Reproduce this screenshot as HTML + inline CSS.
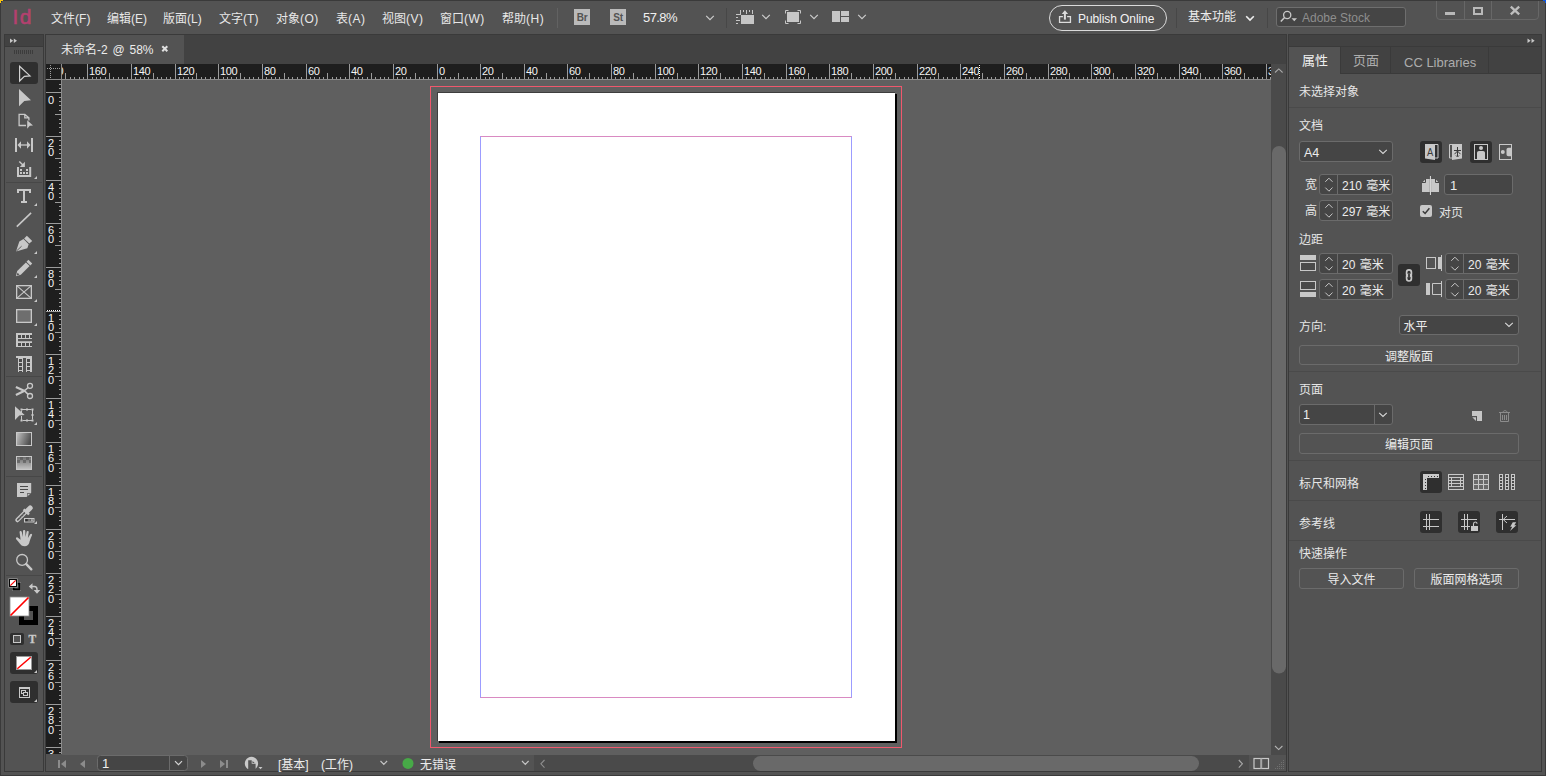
<!DOCTYPE html>
<html lang="zh-CN">
<head>
<meta charset="utf-8">
<title>未命名-2 @ 58% - Adobe InDesign</title>
<style>
*{box-sizing:border-box;margin:0;padding:0}
html,body{width:1546px;height:776px;overflow:hidden}
body{background:#535353;position:relative;font:12px/14px "Liberation Sans","Noto Sans CJK SC",sans-serif;color:#e4e4e4;-webkit-font-smoothing:antialiased}
.abs,.abs>*{position:absolute}
div,span,svg{position:absolute}
.t{white-space:nowrap;line-height:14px;height:14px}
/* window frame */
#frame{left:0;top:0;width:1546px;height:776px;border:1px solid #3a3a3a;pointer-events:none}
/* menu */
#menubar{left:1px;top:1px;width:1544px;height:33px;background:#535353}
.mi{top:11px;font-size:12px;color:#e8e8e8}
.mi i{font-style:normal;letter-spacing:0.5px}
.mi i.n{letter-spacing:0.05px}
.vsep{width:1px;background:#626262}
/* toolbar */
#tools{left:4px;top:34px;width:40px;height:738px;background:#535353;border:1px solid #3a3a3a}
#tools .hd{left:0;top:0;width:38px;height:12px;background:#424242;border-bottom:1px solid #3a3a3a}
.tsep{left:1px;width:36px;height:1px;background:#474747}
/* doc */
#doc{left:45px;top:34px;width:1242px;height:738px;background:#424242;border:1px solid #3a3a3a}
#tab{left:0;top:0;width:138px;height:29px;background:#535353}
#canvas{left:62px;top:80px;width:1209px;height:675px;background:#5f5f5f;overflow:hidden}
#origin{left:46px;top:64px;width:16px;height:16px;background:#1e1e1e}
#vscroll{left:1271px;top:64px;width:15px;height:691px;background:#4a4a4a}
#status{left:46px;top:754px;width:1240px;height:17px;background:#535353}
/* right panel */
#panel{left:1288px;top:34px;width:254px;height:738px;background:#535353;border:1px solid #3a3a3a}
#panel .hd{left:0;top:0;width:252px;height:12px;background:#424242;border-bottom:1px solid #3a3a3a}
#ptabs{left:0;top:12px;width:252px;height:27px;background:#424242;border-bottom:1px solid #3a3a3a}
.ptab{top:0;height:26px;border-right:1px solid #3a3a3a;font-size:13px;color:#adadad}
.ptab.on{background:#535353;height:27px;color:#f0f0f0}
.ptab span{top:6px;line-height:16px;white-space:nowrap}
.hsep{left:0;width:252px;height:1px;background:#4a4a4a}
.lbl{font-size:12px;color:#e6e6e6;white-space:nowrap;line-height:14px}
.fld{background:#454545;border:1px solid #6b6b6b;border-radius:3px}
.fld .v{left:22px;top:3px;font-size:13px;line-height:14px;color:#ececec;white-space:nowrap;word-spacing:1px}
.fld .dv{left:16px;top:0;width:1px;height:100%;background:#6b6b6b}
.btn{border:1px solid #6b6b6b;border-radius:3px;text-align:center;font-size:12px;color:#ececec;line-height:17px;white-space:nowrap}
.ib{width:22px;height:22px;border-radius:3px}
.ib.on{background:#2e2e2e}
</style>
</head>
<body>
<!-- ============ MENU BAR ============ -->
<div id="menubar">
  <span class="t" style="left:11.5px;top:4px;font-size:21px;line-height:24px;height:24px;color:#b3416f;font-family:'Liberation Sans',sans-serif;letter-spacing:1.5px;-webkit-text-stroke:0.6px #b3416f">Id</span>
  <span class="t mi" style="left:50px">文件<i class="n">(F)</i></span>
  <span class="t mi" style="left:106px">编辑<i class="n">(E)</i></span>
  <span class="t mi" style="left:162px">版面<i class="n">(L)</i></span>
  <span class="t mi" style="left:218px">文字<i class="n">(T)</i></span>
  <span class="t mi" style="left:275px">对象<i>(O)</i></span>
  <span class="t mi" style="left:335px">表<i>(A)</i></span>
  <span class="t mi" style="left:381px">视图<i>(V)</i></span>
  <span class="t mi" style="left:439px">窗口<i>(W)</i></span>
  <span class="t mi" style="left:501px">帮助<i>(H)</i></span>
  <div class="vsep" style="left:556px;top:7px;height:20px"></div>
  <!-- Br / St -->
<div style="left:573px;top:8px;width:16px;height:16px;background:#bababa"><span class="t" style="left:0;top:2px;width:16px;text-align:center;font-size:10px;font-weight:bold;color:#535353;letter-spacing:-0.3px">Br</span></div>
<div style="left:609px;top:8px;width:16px;height:16px;background:#bababa"><span class="t" style="left:0;top:2px;width:16px;text-align:center;font-size:10px;font-weight:bold;color:#535353;letter-spacing:-0.3px">St</span></div>
<span class="t" style="left:642px;top:10px;font-size:13px;letter-spacing:-0.6px;color:#f0f0f0">57.8%</span>
<svg style="left:704px;top:13px" width="10" height="8" viewBox="0 0 10 8"><path d="M1.2 1.8 5 5.6 8.8 1.8" fill="none" stroke="#cdcdcd" stroke-width="1.150"/></svg>
<div class="vsep" style="left:725px;top:7px;height:20px;background:#474747"></div>
<!-- view options -->
<svg style="left:734px;top:8px" width="20" height="16" viewBox="735 9 20 16" shape-rendering="crispEdges">
  <rect x="741" y="15" width="13" height="9" fill="#c6c6c6"/>
  <path d="M740.5 10v4.5M736 14.5h5M743.5 10v2M746.5 10v4M749.5 10v2M752.5 10v4M736 17.5h2M736 20.500h4M736 23.5h2" stroke="#c6c6c6" stroke-width="1" fill="none"/>
</svg>
<svg style="left:760px;top:12px" width="10" height="8" viewBox="0 0 10 8"><path d="M1.2 1.8 5 5.6 8.8 1.8" fill="none" stroke="#cdcdcd" stroke-width="1.150"/></svg>
<!-- screen mode -->
<svg style="left:783px;top:8px" width="18" height="16" viewBox="784 9 18 16">
  <rect x="787" y="12" width="12" height="10" fill="#c6c6c6"/>
  <path d="M785.500 13.500v-3h3M797.500 10.500h3v3M800.500 20.500v3h-3M788.500 23.500h-3v-3" stroke="#c6c6c6" stroke-width="1" fill="none"/>
</svg>
<svg style="left:808px;top:12px" width="10" height="8" viewBox="0 0 10 8"><path d="M1.2 1.8 5 5.6 8.8 1.8" fill="none" stroke="#cdcdcd" stroke-width="1.150"/></svg>
<!-- arrange -->
<svg style="left:831px;top:10px" width="18" height="12" viewBox="832 11 18 12" shape-rendering="crispEdges">
  <rect x="832" y="11" width="8" height="11" fill="#c6c6c6"/><rect x="841" y="11" width="8" height="5" fill="#c6c6c6"/><rect x="841" y="17" width="8" height="5" fill="#c6c6c6"/>
</svg>
<svg style="left:856px;top:12px" width="10" height="8" viewBox="0 0 10 8"><path d="M1.2 1.8 5 5.6 8.8 1.8" fill="none" stroke="#cdcdcd" stroke-width="1.150"/></svg>
<!-- publish online -->
<div style="left:1048px;top:4px;width:118px;height:26px;border:1.3px solid #dadada;border-radius:13px"></div>
<svg style="left:1057px;top:9px" width="16" height="16" viewBox="1058 10 16 16"><path d="M1062.900 16.550h-3.350v5.900h10.900v-5.900h-3.350" fill="none" stroke="#dcdcdc" stroke-width="1.300"/><path d="M1064.900 19.600v-6.600" stroke="#dcdcdc" stroke-width="2" fill="none"/><path d="M1061.700 13.900 1064.900 10.300 1068.100 13.900z" fill="#dcdcdc"/></svg>
<span class="t" style="left:1077px;top:11px;font-size:12px;color:#f2f2f2;letter-spacing:-0.08px">Publish Online</span>
<div class="vsep" style="left:1175px;top:7px;height:20px;background:#474747"></div>
<span class="t" style="left:1187px;top:9px;font-size:12px;color:#ececec">基本功能</span>
<svg style="left:1244px;top:13px" width="10" height="8" viewBox="0 0 10 8"><path d="M1.200 2.200 5 6 8.800 2.200" fill="none" stroke="#efefef" stroke-width="1.6"/></svg>
<div class="vsep" style="left:1266px;top:7px;height:20px;background:#474747"></div>
<!-- search -->
<div style="left:1275px;top:6px;width:130px;height:20px;background:#454545;border:1px solid #6e6e6e;border-radius:3px"></div>
<svg style="left:1279px;top:9px" width="20" height="14" viewBox="1280 10 20 14"><circle cx="1287.200" cy="15" r="3.600" fill="none" stroke="#c8c8c8" stroke-width="1.3"/><path d="M1284.600 17.600 1280.800 21.600" stroke="#c8c8c8" stroke-width="1.5" fill="none"/><path d="M1291.500 18.300h5.500l-2.750 3z" fill="#c8c8c8"/></svg>
<span class="t" style="left:1301px;top:10px;font-size:12px;color:#8e8e8e">Adobe Stock</span>
<!-- window controls -->
<div style="left:1435px;top:-4px;width:103px;height:23px;border:1px solid #676767;border-radius:4px"></div>
<div style="left:1463px;top:0;width:1px;height:18px;background:#676767"></div>
<div style="left:1490px;top:0;width:1px;height:18px;background:#676767"></div>
<div style="left:1444px;top:11px;width:10px;height:3px;background:#b9b9b9"></div>
<div style="left:1472px;top:6px;width:10px;height:8px;border:2px solid #b9b9b9"></div>
<svg style="left:1508px;top:4px" width="12" height="11" viewBox="0 0 12 11"><path d="M1.800 1.600 10.200 9.400M10.200 1.600 1.800 9.400" stroke="#bdbdbd" stroke-width="2.300" fill="none"/></svg>

</div>

<!-- ============ TOOLBAR ============ -->
<div id="tools">
  <div class="hd"></div>
  <svg style="left:0;top:0" width="38" height="736" viewBox="5 35 38 736">
<g fill="#c8c8c8" stroke="none">
<!-- header chevrons -->
<path d="M10 38.500l3.200 2.200-3.200 2.200zM13.800 38.500l3.200 2.200-3.200 2.200z"/>
</g>
<!-- gripper -->
<path d="M14.500 50v4M16.500 50v4M18.500 50v4M20.500 50v4M22.500 50v4M24.500 50v4M26.500 50v4M28.500 50v4M30.500 50v4M32.500 50v4" stroke="#3c3c3c" stroke-width="1" fill="none"/>
<!-- selection (active) -->
<rect x="10" y="62" width="28" height="22" rx="3" fill="#2f2f2f"/>
<path d="M19.600 66.300 30 75.900 24.400 76.300 19.600 81z" fill="none" stroke="#d2d2d2" stroke-width="1.200" stroke-linejoin="miter"/>
<!-- direct selection -->
<path d="M19 89 31 100.300 24.300 100.900 19 106.300z" fill="#c8c8c8"/>
<!-- page tool -->
<path d="M26 125.500h-6.900v-11.200h5.700l4.100 3.600v2.500M24.800 114.300v3.600h4.100" fill="none" stroke="#c8c8c8" stroke-width="1.300"/>
<path d="M27.200 120.200 33 125.400 29.800 125.700 27.200 128.800z" fill="#c8c8c8"/>
<!-- gap tool -->
<rect x="15" y="138" width="2" height="14" fill="#c8c8c8"/><rect x="31" y="138" width="2" height="14" fill="#c8c8c8"/>
<path d="M19 145h10" stroke="#c8c8c8" stroke-width="1.300"/>
<path d="M17.500 145 21 141.300v7.400zM30.500 145 27 141.300v7.400z" fill="#c8c8c8"/>
<!-- content collector -->
<path d="M18 167v9h12.200v-9" fill="none" stroke="#c8c8c8" stroke-width="2"/>
<path d="M20 169h2v2h-2zM26 169h2v2h-2zM20 172h2v2h-2zM23 172h2v2h-2zM26 172h2v2h-2z" fill="#c8c8c8"/>
<path d="M19.300 161.500 23.200 165.300" stroke="#c8c8c8" stroke-width="1.500"/>
<path d="M24.900 161.800v5.100h-5.100z" fill="#c8c8c8"/>
<path d="M37 176v3h-3z" fill="#c8c8c8"/>
<path d="M6 182.500h36" stroke="#474747" stroke-width="1"/>
<!-- type tool -->
<path d="M17 189h14v4h-2v-2h-4v10h2v2h-6v-2h2v-10h-4v2h-2z" fill="#c8c8c8"/>
<path d="M37 203v3h-3z" fill="#c8c8c8"/>
<!-- line -->
<path d="M16.800 226.600 31.100 212.800" stroke="#c8c8c8" stroke-width="1.600"/>
<!-- pen -->
<path d="M26.900 235.700 32.200 241 29.300 243.600 24.100 238.500z" fill="#c8c8c8"/>
<path d="M23.500 239.100 28.700 244.200 27.300 248.300 16 251.500 19.300 241.600z" fill="#c8c8c8"/>
<path d="M16.300 251.200 21.600 246.200" stroke="#535353" stroke-width="0.900"/>
<path d="M37 251v3h-3z" fill="#c8c8c8"/>
<!-- pencil -->
<path d="M28.400 259.800 32.200 263.500 30.300 265.500 26.500 261.700z" fill="#c8c8c8"/>
<path d="M25.900 262.400 29.600 266.100 20.800 274.700 15.900 276.200 17.200 271z" fill="#c8c8c8"/>
<path d="M16.700 275.400 17.500 272.700 19.500 274.600z" fill="#535353"/>
<path d="M37 275v3h-3z" fill="#c8c8c8"/>
<!-- rect frame -->
<rect x="16.650" y="285.650" width="14.700" height="12.700" fill="none" stroke="#c8c8c8" stroke-width="1.300"/>
<path d="M16.700 285.700 31.300 298.300M31.300 285.700 16.700 298.300" stroke="#c8c8c8" stroke-width="1.100"/>
<path d="M37 299v3h-3z" fill="#c8c8c8"/>
<!-- rect -->
<rect x="16.650" y="309.650" width="14.700" height="12.700" fill="#6e6e6e" stroke="#c8c8c8" stroke-width="1.300"/>
<path d="M37 323v3h-3z" fill="#c8c8c8"/>
<!-- h grid -->
<path d="M16 333h16v6h-14v2.300h14v5.700h-16z" fill="#c8c8c8"/>
<path d="M18 335h3v3h-3zM22 335h3v3h-3zM26 335h3v3h-3zM30 335h2v3h-2zM18 343h3v3h-3zM22 343h3v3h-3zM26 343h3v3h-3zM30 343h2v3h-2z" fill="#4a4a4a"/>
<!-- v grid -->
<path d="M16 356h16v16h-6v-14h-3v14h-5v-14h-2z" fill="#c8c8c8"/>
<path d="M19 359h3v3h-3zM19 363h3v3h-3zM19 367h3v3h-3zM19 371h3v1h-3zM27 359h3v3h-3zM27 363h3v3h-3zM27 367h3v3h-3zM27 371h3v1h-3z" fill="#4a4a4a"/>
<path d="M6 376.500h36" stroke="#474747" stroke-width="1"/>
<!-- scissors -->
<circle cx="30" cy="385.800" r="2.500" fill="none" stroke="#c8c8c8" stroke-width="1.300"/>
<circle cx="30" cy="396" r="2.500" fill="none" stroke="#c8c8c8" stroke-width="1.300"/>
<path d="M15.900 387.100 24.600 391" stroke="#c8c8c8" stroke-width="2.200" fill="none"/><path d="M15.900 394.900 24.600 390.700" stroke="#c8c8c8" stroke-width="2.200" fill="none"/>
<path d="M23.800 390.200 28.100 394.300M23.800 391.500 28.100 387.500" stroke="#c8c8c8" stroke-width="1.600" fill="none"/>
<!-- free transform -->
<path d="M15 406.200 24.700 415 19.300 415.400 15 420.100z" fill="#c8c8c8"/>
<path d="M21.500 409.500h11v11h-11z" fill="none" stroke="#c8c8c8" stroke-width="1" stroke-dasharray="4.500 1"/>
<path d="M20.500 408.500h2v2h-2zM26 408.500h2v2h-2zM31.500 408.500h2v2h-2zM31.500 414h2v2h-2zM31.500 419.500h2v2h-2zM26 419.500h2v2h-2zM20.500 419.500h2v2h-2z" fill="#c8c8c8"/>
<path d="M37 422v3h-3z" fill="#c8c8c8"/>
<!-- gradient swatch -->
<defs><linearGradient id="gsw" x1="0" x2="1" y1="0" y2="0.300"><stop offset="0" stop-color="#c4c4c4"/><stop offset="1" stop-color="#505050"/></linearGradient>
<linearGradient id="gfe" x1="0" x2="0" y1="0" y2="1"><stop offset="0" stop-color="#6a6a6a"/><stop offset="1" stop-color="#c4c4c4"/></linearGradient></defs>
<rect x="16.500" y="432.500" width="15" height="13" fill="url(#gsw)" stroke="#c8c8c8" stroke-width="1"/>
<!-- gradient feather -->
<rect x="16.500" y="456.500" width="15" height="13" fill="url(#gfe)" stroke="#c8c8c8" stroke-width="1"/>
<path d="M20 457h3v3h-3zM26 457h3v3h-3zM17 460h3v3h-3zM23 460h3v3h-3zM29 460h2v3h-2z" fill="#4e4e4e" opacity="0.550"/>
<path d="M6 476.500h36" stroke="#474747" stroke-width="1"/>
<!-- note -->
<path d="M17 483h14.200v9.800l-4.700 4.200h-9.500z" fill="#c8c8c8"/>
<path d="M20 486.500h8M20 489.500h8M20 492.500h4" stroke="#4a4a4a" stroke-width="1"/>
<path d="M27 493.300h3.700l-3.700 3.300z" fill="#535353"/><path d="M27.600 493.900h2.400l-2.400 2.200z" fill="#c8c8c8"/>
<!-- eyedropper -->
<path d="M25.500 512 17.400 520.100" stroke="#c8c8c8" stroke-width="4.300" stroke-linecap="round" fill="none"/>
<path d="M24.600 512.900 17.700 519.800" stroke="#535353" stroke-width="1.700" stroke-linecap="round" fill="none"/>
<path d="M22.800 514.200l1 1M21.200 515.800l1 1M19.600 517.400l1 1" stroke="#9a9a9a" stroke-width="0.800" fill="none"/>
<path d="M23.600 509.300 29 514.500" stroke="#c8c8c8" stroke-width="2.400" fill="none"/>
<path d="M27.400 510.700 30.200 507.900" stroke="#c8c8c8" stroke-width="5" stroke-linecap="round" fill="none"/>
<rect x="24.500" y="518.500" width="9.500" height="3.500" fill="#535353" stroke="#c8c8c8" stroke-width="1"/>
<rect x="25.500" y="519.200" width="2" height="2" fill="#2e2e2e"/><rect x="28.200" y="519.200" width="2" height="2" fill="#7a7a7a"/><rect x="30.900" y="519.200" width="2" height="2" fill="#a8a8a8"/>
<path d="M37 521v3h-3z" fill="#c8c8c8"/>
<!-- hand -->
<path d="M21.600 545.600C20 544 18.500 541.500 16.200 539.200C15.400 538.200 16.400 536.800 17.600 537.500L20.600 539.800L19.600 532.400C19.400 530.900 21.500 530.600 21.800 532L22.800 537L23 531C23 529.500 25.300 529.500 25.300 531L25.500 537L26.600 531.800C26.900 530.400 29 530.800 28.700 532.300L27.900 538L30.200 534.200C31 533 32.700 534 32 535.300C30.500 538.500 29.800 541 29.200 543C28.600 545 27 546.200 24.800 546.200C23.400 546.200 22.400 546 21.600 545.600Z" fill="#c8c8c8"/>
<!-- zoom -->
<circle cx="22.100" cy="559.900" r="5.400" fill="none" stroke="#c8c8c8" stroke-width="1.300"/>
<path d="M26.300 564.100 31.300 569.300" stroke="#c8c8c8" stroke-width="2.400" stroke-linecap="round"/>
<path d="M6 575.500h36" stroke="#474747" stroke-width="1"/>
<!-- default fill/stroke -->
<rect x="12.500" y="582.500" width="8" height="8" fill="none" stroke="#9a9a9a" stroke-width="1"/>
<rect x="13.500" y="583.500" width="6" height="6" fill="none" stroke="#000" stroke-width="2"/>
<rect x="9.500" y="579.500" width="7" height="7" fill="#fff" stroke="#000" stroke-width="1"/>
<rect x="8.700" y="578.700" width="8.600" height="8.600" fill="none" stroke="#9a9a9a" stroke-width="0.700"/>
<path d="M10.300 585.700 15.700 580.300" stroke="#f00" stroke-width="1.200"/>
<!-- swap -->
<path d="M32 586.500h2.500c2 0 2.500 1 2.500 3v1.500" fill="none" stroke="#c8c8c8" stroke-width="1.400"/>
<path d="M28.800 586.500 32.500 583.200v6.600zM37 593.800 33.700 590h6.600z" fill="#c8c8c8"/>
<!-- stroke swatch -->
<path d="M19 606h19v19h-19zM24 611v9h9v-9z" fill="#000" fill-rule="evenodd"/>
<!-- fill swatch -->
<rect x="10" y="597" width="19" height="19" fill="#fff" stroke="#8a8a8a" stroke-width="0.800"/>
<path d="M10.500 615.500 28.500 597.500" stroke="#f00" stroke-width="1.700"/>
<!-- format container / text -->
<rect x="10" y="633" width="14" height="12" rx="2" fill="#2f2f2f"/>
<rect x="13.500" y="635.500" width="7" height="7" fill="#535353" stroke="#c8c8c8" stroke-width="1"/>
<text x="28.600" y="642.800" font-family="Liberation Serif, serif" font-weight="bold" font-size="11.500" fill="#c8c8c8" stroke="#c8c8c8" stroke-width="0.300">T</text>
<!-- apply none -->
<rect x="10" y="652" width="28" height="22" rx="3" fill="#2f2f2f"/>
<rect x="16.500" y="656.500" width="15" height="13" fill="#fff" stroke="#9a9a9a" stroke-width="1"/>
<path d="M17.300 668.800 30.700 657.200" stroke="#f00" stroke-width="1.500"/>
<path d="M37 670v3h-3z" fill="#c8c8c8"/>
<!-- view mode -->
<rect x="10" y="681" width="28" height="22" rx="3" fill="#2f2f2f"/>
<rect x="19.500" y="687.500" width="10" height="10" fill="none" stroke="#c8c8c8" stroke-width="1"/>
<path d="M19.500 688.500h10" stroke="#c8c8c8" stroke-width="1"/>
<rect x="21.500" y="690.500" width="4" height="3" fill="none" stroke="#c8c8c8" stroke-width="1"/>
<rect x="23.500" y="692.500" width="4" height="3" fill="#2f2f2f" stroke="#c8c8c8" stroke-width="1"/>
<path d="M37 699v3h-3z" fill="#c8c8c8"/>
</svg>

</div>

<!-- ============ DOCUMENT WINDOW ============ -->
<div id="doc"></div>
<div id="tab" style="left:46px;top:35px"><span class="t" style="left:15px;top:8px;font-size:12px;color:#ececec;word-spacing:1.5px">未命名-2 @ 58%</span><svg style="left:115px;top:10px" width="8" height="8" viewBox="0 0 8 8"><path d="M1.300 1.300 6.300 6.300M6.300 1.300 1.300 6.300" stroke="#e0e0e0" stroke-width="2" fill="none"/></svg>
</div>
<div id="origin"><svg style="left:0;top:0" width="16" height="16" viewBox="46 64 16 16" shape-rendering="crispEdges"><path d="M47 68h1v1h-1zM49 68h1v1h-1zM51 68h1v1h-1zM53 68h1v1h-1zM55 68h1v1h-1zM57 68h1v1h-1zM59 68h1v1h-1zM50 65h1v1h-1zM50 67h1v1h-1zM50 69h1v1h-1zM50 71h1v1h-1zM50 73h1v1h-1zM50 75h1v1h-1zM50 77h1v1h-1z" fill="#a0a0a0"/><path d="M46 79.500h16M61.500 64v16" stroke="#8c8c8c" stroke-width="1"/></svg></div>
<svg width="1209" height="16" viewBox="62 64 1209 16" style="left:62px;top:64px"><rect x="62" y="64" width="1209" height="15" fill="#1e1e1e"/><rect x="62" y="79" width="1209" height="1" fill="#8c8c8c"/><path d="M65 73v6M70 77v2M74 77v2M79 77v2M83 77v2M87 64v15M92 77v2M96 77v2M100 77v2M105 77v2M109 73v6M113 77v2M118 77v2M122 77v2M127 77v2M131 64v15M135 77v2M140 77v2M144 77v2M148 77v2M153 73v6M157 77v2M161 77v2M166 77v2M170 77v2M175 64v15M179 77v2M183 77v2M188 77v2M192 77v2M196 73v6M201 77v2M205 77v2M210 77v2M214 77v2M218 64v15M223 77v2M227 77v2M231 77v2M236 77v2M240 73v6M244 77v2M249 77v2M253 77v2M258 77v2M262 64v15M266 77v2M271 77v2M275 77v2M279 77v2M284 73v6M288 77v2M292 77v2M297 77v2M301 77v2M306 64v15M310 77v2M314 77v2M319 77v2M323 77v2M327 73v6M332 77v2M336 77v2M340 77v2M345 77v2M349 64v15M354 77v2M358 77v2M362 77v2M367 77v2M371 73v6M375 77v2M380 77v2M384 77v2M388 77v2M393 64v15M397 77v2M402 77v2M406 77v2M410 77v2M415 73v6M419 77v2M423 77v2M428 77v2M432 77v2M437 64v15M441 77v2M445 77v2M450 77v2M454 77v2M458 73v6M463 77v2M467 77v2M471 77v2M476 77v2M480 64v15M485 77v2M489 77v2M493 77v2M498 77v2M502 73v6M506 77v2M511 77v2M515 77v2M519 77v2M524 64v15M528 77v2M533 77v2M537 77v2M541 77v2M546 73v6M550 77v2M554 77v2M559 77v2M563 77v2M567 64v15M572 77v2M576 77v2M581 77v2M585 77v2M589 73v6M594 77v2M598 77v2M602 77v2M607 77v2M611 64v15M615 77v2M620 77v2M624 77v2M629 77v2M633 73v6M637 77v2M642 77v2M646 77v2M650 77v2M655 64v15M659 77v2M663 77v2M668 77v2M672 77v2M677 73v6M681 77v2M685 77v2M690 77v2M694 77v2M698 64v15M703 77v2M707 77v2M712 77v2M716 77v2M720 73v6M725 77v2M729 77v2M733 77v2M738 77v2M742 64v15M746 77v2M751 77v2M755 77v2M760 77v2M764 73v6M768 77v2M773 77v2M777 77v2M781 77v2M786 64v15M790 77v2M794 77v2M799 77v2M803 77v2M808 73v6M812 77v2M816 77v2M821 77v2M825 77v2M829 64v15M834 77v2M838 77v2M842 77v2M847 77v2M851 73v6M856 77v2M860 77v2M864 77v2M869 77v2M873 64v15M877 77v2M882 77v2M886 77v2M890 77v2M895 73v6M899 77v2M904 77v2M908 77v2M912 77v2M917 64v15M921 77v2M925 77v2M930 77v2M934 77v2M938 73v6M943 77v2M947 77v2M952 77v2M956 77v2M960 64v15M965 77v2M969 77v2M973 77v2M978 77v2M982 73v6M987 77v2M991 77v2M995 77v2M1000 77v2M1004 64v15M1008 77v2M1013 77v2M1017 77v2M1021 77v2M1026 73v6M1030 77v2M1035 77v2M1039 77v2M1043 77v2M1048 64v15M1052 77v2M1056 77v2M1061 77v2M1065 77v2M1069 73v6M1074 77v2M1078 77v2M1083 77v2M1087 77v2M1091 64v15M1096 77v2M1100 77v2M1104 77v2M1109 77v2M1113 73v6M1117 77v2M1122 77v2M1126 77v2M1131 77v2M1135 64v15M1139 77v2M1144 77v2M1148 77v2M1152 77v2M1157 73v6M1161 77v2M1165 77v2M1170 77v2M1174 77v2M1179 64v15M1183 77v2M1187 77v2M1192 77v2M1196 77v2M1200 73v6M1205 77v2M1209 77v2M1214 77v2M1218 77v2M1222 64v15M1227 77v2M1231 77v2M1235 77v2M1240 77v2M1244 73v6M1248 77v2M1253 77v2M1257 77v2M1262 77v2M1266 64v15M1270 77v2" stroke="#9c9c9c" stroke-width="1" transform="translate(0.5 0)" fill="none"/><g font-family="Liberation Sans, sans-serif" font-size="11" letter-spacing="-0.35" fill="#f4f4f4"><text x="46" y="75">180</text><text x="89" y="75">160</text><text x="133" y="75">140</text><text x="177" y="75">120</text><text x="220" y="75">100</text><text x="264" y="75">80</text><text x="308" y="75">60</text><text x="351" y="75">40</text><text x="395" y="75">20</text><text x="439" y="75">0</text><text x="482" y="75">20</text><text x="526" y="75">40</text><text x="569" y="75">60</text><text x="613" y="75">80</text><text x="657" y="75">100</text><text x="700" y="75">120</text><text x="744" y="75">140</text><text x="788" y="75">160</text><text x="831" y="75">180</text><text x="875" y="75">200</text><text x="919" y="75">220</text><text x="962" y="75">240</text><text x="1006" y="75">260</text><text x="1050" y="75">280</text><text x="1093" y="75">300</text><text x="1137" y="75">320</text><text x="1181" y="75">340</text><text x="1224" y="75">360</text><text x="1268" y="75">380</text></g><path d="M979.5 64v15" stroke="#000" stroke-width="1"/><path d="M979.5 65v14" stroke="#fff" stroke-width="1" stroke-dasharray="1 1"/></svg>
<svg width="16" height="674" viewBox="46 80 16 674" style="left:46px;top:80px"><rect x="46" y="80" width="15" height="674" fill="#1e1e1e"/><rect x="61" y="80" width="1" height="674" fill="#8c8c8c"/><path d="M59 84h2M59 88h2M46 92h15M59 97h2M59 101h2M59 105h2M59 110h2M55 114h6M59 119h2M59 123h2M59 127h2M59 132h2M46 136h15M59 140h2M59 145h2M59 149h2M59 153h2M55 158h6M59 162h2M59 167h2M59 171h2M59 175h2M46 180h15M59 184h2M59 188h2M59 193h2M59 197h2M55 202h6M59 206h2M59 210h2M59 215h2M59 219h2M46 223h15M59 228h2M59 232h2M59 236h2M59 241h2M55 245h6M59 250h2M59 254h2M59 258h2M59 263h2M46 267h15M59 271h2M59 276h2M59 280h2M59 284h2M55 289h6M59 293h2M59 298h2M59 302h2M59 306h2M46 311h15M59 315h2M59 319h2M59 324h2M59 328h2M55 332h6M59 337h2M59 341h2M59 346h2M59 350h2M46 354h15M59 359h2M59 363h2M59 367h2M59 372h2M55 376h6M59 380h2M59 385h2M59 389h2M59 394h2M46 398h15M59 402h2M59 407h2M59 411h2M59 415h2M55 420h6M59 424h2M59 429h2M59 433h2M59 437h2M46 442h15M59 446h2M59 450h2M59 455h2M59 459h2M55 463h6M59 468h2M59 472h2M59 477h2M59 481h2M46 485h15M59 490h2M59 494h2M59 498h2M59 503h2M55 507h6M59 511h2M59 516h2M59 520h2M59 525h2M46 529h15M59 533h2M59 538h2M59 542h2M59 546h2M55 551h6M59 555h2M59 559h2M59 564h2M59 568h2M46 573h15M59 577h2M59 581h2M59 586h2M59 590h2M55 594h6M59 599h2M59 603h2M59 607h2M59 612h2M46 616h15M59 621h2M59 625h2M59 629h2M59 634h2M55 638h6M59 642h2M59 647h2M59 651h2M59 655h2M46 660h15M59 664h2M59 669h2M59 673h2M59 677h2M55 682h6M59 686h2M59 690h2M59 695h2M59 699h2M46 704h15M59 708h2M59 712h2M59 717h2M59 721h2M55 725h6M59 730h2M59 734h2M59 738h2M59 743h2M46 747h15M59 752h2" stroke="#9c9c9c" stroke-width="1" transform="translate(0 0.5)" fill="none"/><g font-family="Liberation Sans, sans-serif" font-size="11" fill="#f4f4f4"><text x="48" y="104">0</text><text x="48" y="147">2</text><text x="48" y="156.3">0</text><text x="48" y="191">4</text><text x="48" y="200.3">0</text><text x="48" y="234">6</text><text x="48" y="243.3">0</text><text x="48" y="278">8</text><text x="48" y="287.3">0</text><text x="48" y="322">1</text><text x="48" y="331.3">0</text><text x="48" y="340.6">0</text><text x="48" y="365">1</text><text x="48" y="374.3">2</text><text x="48" y="383.6">0</text><text x="48" y="409">1</text><text x="48" y="418.3">4</text><text x="48" y="427.6">0</text><text x="48" y="453">1</text><text x="48" y="462.3">6</text><text x="48" y="471.6">0</text><text x="48" y="496">1</text><text x="48" y="505.3">8</text><text x="48" y="514.6">0</text><text x="48" y="540">2</text><text x="48" y="549.3">0</text><text x="48" y="558.6">0</text><text x="48" y="584">2</text><text x="48" y="593.3">2</text><text x="48" y="602.6">0</text><text x="48" y="627">2</text><text x="48" y="636.3">4</text><text x="48" y="645.6">0</text><text x="48" y="671">2</text><text x="48" y="680.3">6</text><text x="48" y="689.6">0</text><text x="48" y="715">2</text><text x="48" y="724.3">8</text><text x="48" y="733.6">0</text><text x="48" y="758">3</text></g><path d="M46 310.5h15" stroke="#000" stroke-width="1"/><path d="M47 310.5h14" stroke="#fff" stroke-width="1" stroke-dasharray="1 1"/></svg>
<div id="status"><svg style="left:0;top:0" width="1240" height="17" viewBox="46 754 1240 17">
<g fill="#8c8c8c">
<rect x="58" y="760" width="2" height="8"/><path d="M66 760v8l-5-4z"/>
<path d="M85 760v8l-5-4z"/>
<path d="M201 760v8l5-4z"/>
<path d="M220 760v8l5-4z"/><rect x="226" y="760" width="2" height="8"/>
</g>
<rect x="97.500" y="755.500" width="90" height="15" rx="3" fill="#454545" stroke="#6b6b6b"/>
<path d="M169.500 755.500v15" stroke="#6b6b6b"/>
<path d="M175 761.200l3.500 3.500 3.500-3.500" fill="none" stroke="#d2d2d2" stroke-width="1.200"/>
<!-- preflight -->
<clipPath id="pfc"><rect x="244" y="756" width="16" height="13"/></clipPath>
<g clip-path="url(#pfc)"><path d="M251.450 756.800a6.650 6.650 0 1 0 0.010 0zM248.200 760.200h3.500v3.500h3.900v7h-7.400z" fill="#cacaca" fill-rule="evenodd"/>
<path d="M252.500 761l2.200 2.100h-2.200z" fill="#535353"/></g>
<path d="M258.500 767h4l-2 2.200z" fill="#c8c8c8"/>
<path d="M380.500 761l3.300 3.300 3.300-3.300" fill="none" stroke="#c4c4c4" stroke-width="1.200"/>
<circle cx="408" cy="763.400" r="5.500" fill="#47a947"/>
<path d="M522 761l3.300 3.300 3.300-3.300" fill="none" stroke="#c4c4c4" stroke-width="1.200"/>
<!-- hscroll -->
<rect x="534" y="755" width="715" height="16" fill="#4a4a4a"/>
<path d="M544.500 760l-3.600 3.800 3.600 3.800" fill="none" stroke="#8e8e8e" stroke-width="1.100"/>
<rect x="753" y="756" width="446" height="15" rx="7.500" fill="#696969"/>
<path d="M1238.800 760l3.600 3.800-3.600 3.800" fill="none" stroke="#a8a8a8" stroke-width="1.100"/>
<rect x="1254" y="758.500" width="14.500" height="10" fill="none" stroke="#c8c8c8" stroke-width="1.200"/>
<path d="M1261.200 758.500v10" stroke="#a6a6a6" stroke-width="2"/>
<g fill="#707070"><rect x="1283" y="760" width="1" height="1"/><rect x="1281" y="762" width="1" height="1"/><rect x="1283" y="762" width="1" height="1"/><rect x="1279" y="764" width="1" height="1"/><rect x="1281" y="764" width="1" height="1"/><rect x="1283" y="764" width="1" height="1"/><rect x="1277" y="766" width="1" height="1"/><rect x="1279" y="766" width="1" height="1"/><rect x="1281" y="766" width="1" height="1"/><rect x="1283" y="766" width="1" height="1"/><rect x="1275" y="768" width="1" height="1"/><rect x="1277" y="768" width="1" height="1"/><rect x="1279" y="768" width="1" height="1"/><rect x="1281" y="768" width="1" height="1"/><rect x="1283" y="768" width="1" height="1"/></g>
</svg>
<span class="t" style="left:56px;top:3px;font-size:13px;color:#f0f0f0">1</span>
<span class="t" style="left:232px;top:4px;font-size:12px;color:#ececec">[基本]</span>
<span class="t" style="left:275px;top:4px;font-size:12px;color:#ececec">(工作)</span>
<span class="t" style="left:374px;top:4px;font-size:12px;color:#ececec">无错误</span>
</div>
<div id="canvas">
  <!-- coordinates relative to canvas (62,80) -->
  <div style="left:368px;top:6px;width:472px;height:662px;border:1px solid #ef586d"></div>
  <div style="left:377px;top:14px;width:458px;height:649px;background:#000"></div>
  <div style="left:375px;top:12px;width:458px;height:649px;background:#fff;border-left:1px solid #3e3e3e;border-top:1px solid #3e3e3e"></div>
  <div style="left:418px;top:56px;width:372px;height:562px;border-top:1px solid #d98ac2;border-bottom:1px solid #d98ac2;border-left:1px solid #9c9cff;border-right:1px solid #9c9cff"></div>
</div>
<div id="vscroll"><svg style="left:0;top:0" width="15" height="690" viewBox="1271 64 15 690">
<path d="M1275 72.500l3.800-3.600 3.800 3.600" fill="none" stroke="#a8a8a8" stroke-width="1.100"/>
<rect x="1272" y="146" width="14" height="527.500" rx="7" fill="#696969"/>
<path d="M1275 746l3.700 3.600 3.700-3.600" fill="none" stroke="#b4b4b4" stroke-width="1.100"/>
</svg>
</div>

<!-- ============ RIGHT PANEL ============ -->
<div id="panel">
  <div class="hd"></div>
  <div id="ptabs"><div class="ptab on" style="left:0;width:52px"><span style="left:13px">属性</span></div><div class="ptab" style="left:52px;width:50px"><span style="left:12px">页面</span></div><div class="ptab" style="left:102px;width:98px"><span style="left:13px;top:8px">CC Libraries</span></div></div>
<svg style="left:238px;top:3px" width="9" height="6" viewBox="0 0 9 6"><path d="M0.500 0.500l3.200 2.300-3.200 2.300zM4.500 0.500l3.200 2.300-3.200 2.300z" fill="#c8c8c8"/></svg>
<span class="lbl" style="left:10px;top:50px;font-size:12px;color:#e6e6e6;">未选择对象</span>
<div class="hsep" style="top:72px"></div>
<span class="lbl" style="left:10px;top:84px;font-size:12px;color:#e6e6e6;">文档</span>
<div class="fld" style="left:10px;top:106px;width:94px;height:21px"><svg style="left:78px;top:5.5px" width="10" height="8" viewBox="0 0 10 8"><path d="M1.200 1.800 5 5.500 8.800 1.800" fill="none" stroke="#dadada" stroke-width="1.050"/></svg><span class="v" style="left:4px;top:3.5px;font-size:12.5px">A4</span></div>
<span class="lbl" style="left:16px;top:143px;font-size:12px;color:#e6e6e6;">宽</span>
<div class="fld" style="left:30px;top:139px;width:74px;height:21px"><div class="dv" style="left:17px"></div><svg style="left:4px;top:2px" width="10" height="15" viewBox="0 0 10 15"><path d="M1.300 5.500l3.600-3.600 3.600 3.600 M1.300 11.300l3.600 3.600 3.600-3.600" transform="translate(0 -0.700)" fill="none" stroke="#c8c8c8" stroke-width="1"/></svg><span class="v" style="left:22px;top:4px;font-size:12px">210 毫米</span></div>
<span class="lbl" style="left:16px;top:169px;font-size:12px;color:#e6e6e6;">高</span>
<div class="fld" style="left:30px;top:165px;width:74px;height:21px"><div class="dv" style="left:17px"></div><svg style="left:4px;top:2px" width="10" height="15" viewBox="0 0 10 15"><path d="M1.300 5.500l3.600-3.600 3.600 3.600 M1.300 11.300l3.600 3.600 3.600-3.600" transform="translate(0 -0.700)" fill="none" stroke="#c8c8c8" stroke-width="1"/></svg><span class="v" style="left:22px;top:4px;font-size:12px">297 毫米</span></div>
<div class="fld" style="left:155px;top:139px;width:69px;height:21px"><span class="v" style="left:5px;top:4px;font-size:13px">1</span></div>
<svg style="left:131px;top:170px" width="12" height="12" viewBox="0 0 12 12"><rect x="0" y="0" width="12" height="12" rx="2" fill="#c8c8c8"/><path d="M2.800 6.200 5.100 8.500 9.400 3.200" fill="none" stroke="#3a3a3a" stroke-width="1.500"/></svg>
<span class="lbl" style="left:150px;top:171px;font-size:12px;color:#e6e6e6;">对页</span>
<span class="lbl" style="left:10px;top:198px;font-size:12px;color:#e6e6e6;">边距</span>
<div class="fld" style="left:30px;top:218px;width:74px;height:21px"><div class="dv" style="left:17px"></div><svg style="left:4px;top:2px" width="10" height="15" viewBox="0 0 10 15"><path d="M1.300 5.500l3.600-3.600 3.600 3.600 M1.300 11.300l3.600 3.600 3.600-3.600" transform="translate(0 -0.700)" fill="none" stroke="#c8c8c8" stroke-width="1"/></svg><span class="v" style="left:22px;top:4px;font-size:12px">20 毫米</span></div>
<div class="fld" style="left:30px;top:244px;width:74px;height:21px"><div class="dv" style="left:17px"></div><svg style="left:4px;top:2px" width="10" height="15" viewBox="0 0 10 15"><path d="M1.300 5.500l3.600-3.600 3.600 3.600 M1.300 11.300l3.600 3.600 3.600-3.600" transform="translate(0 -0.700)" fill="none" stroke="#c8c8c8" stroke-width="1"/></svg><span class="v" style="left:22px;top:4px;font-size:12px">20 毫米</span></div>
<div class="fld" style="left:156px;top:218px;width:74px;height:21px"><div class="dv" style="left:17px"></div><svg style="left:4px;top:2px" width="10" height="15" viewBox="0 0 10 15"><path d="M1.300 5.500l3.600-3.600 3.600 3.600 M1.300 11.300l3.600 3.600 3.600-3.600" transform="translate(0 -0.700)" fill="none" stroke="#c8c8c8" stroke-width="1"/></svg><span class="v" style="left:22px;top:4px;font-size:12px">20 毫米</span></div>
<div class="fld" style="left:156px;top:244px;width:74px;height:21px"><div class="dv" style="left:17px"></div><svg style="left:4px;top:2px" width="10" height="15" viewBox="0 0 10 15"><path d="M1.300 5.500l3.600-3.600 3.600 3.600 M1.300 11.300l3.600 3.600 3.600-3.600" transform="translate(0 -0.700)" fill="none" stroke="#c8c8c8" stroke-width="1"/></svg><span class="v" style="left:22px;top:4px;font-size:12px">20 毫米</span></div>
<span class="lbl" style="left:10px;top:285px;font-size:12px;color:#e6e6e6;">方向:</span>
<div class="fld" style="left:110px;top:280px;width:120px;height:20px"><svg style="left:104px;top:5px" width="10" height="8" viewBox="0 0 10 8"><path d="M1.200 1.800 5 5.500 8.800 1.800" fill="none" stroke="#dadada" stroke-width="1.050"/></svg><span class="v" style="left:3.5px;top:4px;font-size:12px">水平</span></div>
<div class="btn" style="left:10px;top:310px;width:220px;height:20px;line-height:14px;padding-top:4px">调整版面</div>
<div class="hsep" style="top:336px"></div>
<span class="lbl" style="left:10px;top:348px;font-size:12px;color:#e6e6e6;">页面</span>
<div class="fld" style="left:10px;top:369px;width:94px;height:21px"><div class="dv" style="left:74px"></div><svg style="left:78px;top:5.5px" width="10" height="8" viewBox="0 0 10 8"><path d="M1.200 1.800 5 5.500 8.800 1.800" fill="none" stroke="#dadada" stroke-width="1.050"/></svg><span class="v" style="left:3px;top:2.5px;font-size:12.5px">1</span></div>
<div class="btn" style="left:10px;top:398px;width:220px;height:21px;line-height:15px;padding-top:4px">编辑页面</div>
<div class="hsep" style="top:425px"></div>
<span class="lbl" style="left:10px;top:442px;font-size:12px;color:#e6e6e6;">标尺和网格</span>
<div class="hsep" style="top:465px"></div>
<span class="lbl" style="left:10px;top:482px;font-size:12px;color:#e6e6e6;">参考线</span>
<div class="hsep" style="top:505px"></div>
<span class="lbl" style="left:10px;top:512px;font-size:12px;color:#e6e6e6;">快速操作</span>
<div class="btn" style="left:10px;top:533px;width:105px;height:21px;line-height:15px;padding-top:4px">导入文件</div>
<div class="btn" style="left:125px;top:533px;width:105px;height:21px;line-height:15px;padding-top:4px">版面网格选项</div>
<svg style="left:0;top:0" width="252" height="600" viewBox="1289 35 252 600"><rect x="1420" y="141" width="22" height="22" rx="3" fill="#2f2f2f"/><rect x="1470" y="141" width="22" height="22" rx="3" fill="#2f2f2f"/><path d="M1434.500 144.500h3.500v13.500h-3.500" fill="none" stroke="#c8c8c8" stroke-width="1"/><path d="M1425 144h10v16l-10-1.500z" fill="#c8c8c8"/><text transform="translate(1427 155.700) scale(0.9 1)" font-family="Liberation Sans, sans-serif" font-size="10.500" fill="#3a3a3a">A</text><path d="M1452.500 144.500h-3v13.500h3" fill="none" stroke="#c8c8c8" stroke-width="1"/><path d="M1452 144h10v14.500l-10 1.500z" fill="#c8c8c8"/><path d="M1457.500 147v9M1454 150.500h7M1454.500 154.200 1457.500 151 1460.500 154.200M1456 155.500l1.500 1.500 1.500-1.500" fill="none" stroke="#3a3a3a" stroke-width="1"/><rect x="1474.500" y="144.500" width="13" height="15" fill="none" stroke="#c8c8c8" stroke-width="1"/><circle cx="1481" cy="148" r="2" fill="#c8c8c8"/><path d="M1477 160v-7c0-1.200 0.800-2 2-2h4c1.200 0 2 0.800 2 2v7z" fill="#c8c8c8"/><rect x="1499.500" y="144.500" width="12" height="15" fill="none" stroke="#c8c8c8" stroke-width="1"/><circle cx="1502.800" cy="152" r="2" fill="#c8c8c8"/><path d="M1512 147.700h-3.500c-1.200 0-2 0.800-2 2v4.600c0 1.200 0.800 2 2 2h3.500z" fill="#c8c8c8"/><path d="M1422 192v-9.300l3.700-3.700h4.100v13zM1431.100 192v-13h4.200l3.700 3.700v9.300z" fill="#c8c8c8"/><path d="M1425.500 179v3.500h-3.500M1435.500 179v3.500h3.500" fill="none" stroke="#484848" stroke-width="1"/><path d="M1430.450 176v19" stroke="#dedede" stroke-width="1"/><rect x="1300" y="255" width="16" height="5" fill="#c8c8c8"/><rect x="1300.500" y="262.500" width="15" height="8" fill="#4a4a4a" stroke="#c8c8c8"/><rect x="1300.500" y="281.500" width="15" height="8" fill="#4a4a4a" stroke="#c8c8c8"/><rect x="1300" y="292" width="16" height="5" fill="#c8c8c8"/><rect x="1398" y="264" width="22" height="22" rx="3" fill="#2f2f2f"/><rect x="1406.600" y="269.800" width="4.800" height="6.600" rx="2.400" fill="none" stroke="#c8c8c8" stroke-width="1.700"/><rect x="1406.600" y="274.400" width="4.800" height="6.600" rx="2.400" fill="none" stroke="#c8c8c8" stroke-width="1.700"/><path d="M1409 273.500v4" stroke="#2f2f2f" stroke-width="1.700"/><rect x="1426.500" y="257.500" width="9" height="11" fill="none" stroke="#c8c8c8"/><rect x="1438" y="257" width="3" height="12" fill="#c8c8c8"/><path d="M1441.500 255v16" stroke="#c8c8c8"/><rect x="1426" y="283" width="4" height="12" fill="#c8c8c8"/><path d="M1441.500 283.500h-9v11h9" fill="none" stroke="#c8c8c8"/><path d="M1441.500 281v16" stroke="#c8c8c8"/><path d="M1472 411h10v10h-5v-5h-5z" fill="#c6c6c6"/><path d="M1472.300 417.300h3.700v3.700z" fill="#c6c6c6"/><g fill="none" stroke="#8c8c8c" stroke-width="1"><path d="M1499 412.500h11M1503 412.500c0-2.500 4-2.500 4 0M1500.500 413v8.500h8v-8.500M1502.500 415v5M1504.500 415v5M1506.500 415v5"/></g><rect x="1420" y="471" width="22" height="22" rx="3" fill="#2f2f2f"/><path d="M1423 474h16v4h-12v12h-4z" fill="#c8c8c8"/><path d="M1428 476h1v1h-1zM1431 476h1v1h-1zM1434 476h1v1h-1zM1437 476h1v1h-1zM1425 479h1v1h-1zM1425 482h1v1h-1zM1425 485h1v1h-1zM1425 488h1v1h-1z" fill="#333"/><g fill="none" stroke="#c8c8c8" stroke-width="1"><rect x="1448.500" y="474.500" width="15" height="15"/><path d="M1448.500 477.500h15M1448.500 480.500h15M1448.500 483.500h15M1448.500 486.500h15M1451.500 477.500v9M1460.500 477.500v9"/></g><g fill="#6a6a6a" stroke="#c8c8c8" stroke-width="1"><rect x="1473.500" y="474.500" width="15" height="15"/><path d="M1478.500 474.500v15M1483.500 474.500v15M1473.500 479.500h15M1473.500 484.500h15" fill="none"/></g><rect x="1499" y="474" width="4" height="16" fill="#c8c8c8"/><rect x="1500" y="475" width="2" height="2" fill="#4a4a4a"/><rect x="1500" y="478" width="2" height="2" fill="#4a4a4a"/><rect x="1500" y="481" width="2" height="2" fill="#4a4a4a"/><rect x="1500" y="484" width="2" height="2" fill="#4a4a4a"/><rect x="1500" y="487" width="2" height="2" fill="#4a4a4a"/><rect x="1505" y="474" width="4" height="16" fill="#c8c8c8"/><rect x="1506" y="475" width="2" height="2" fill="#4a4a4a"/><rect x="1506" y="478" width="2" height="2" fill="#4a4a4a"/><rect x="1506" y="481" width="2" height="2" fill="#4a4a4a"/><rect x="1506" y="484" width="2" height="2" fill="#4a4a4a"/><rect x="1506" y="487" width="2" height="2" fill="#4a4a4a"/><rect x="1511" y="474" width="4" height="16" fill="#c8c8c8"/><rect x="1512" y="475" width="2" height="2" fill="#4a4a4a"/><rect x="1512" y="478" width="2" height="2" fill="#4a4a4a"/><rect x="1512" y="481" width="2" height="2" fill="#4a4a4a"/><rect x="1512" y="484" width="2" height="2" fill="#4a4a4a"/><rect x="1512" y="487" width="2" height="2" fill="#4a4a4a"/><rect x="1420" y="511" width="22" height="22" rx="3" fill="#2f2f2f"/><rect x="1458" y="511" width="22" height="22" rx="3" fill="#2f2f2f"/><rect x="1496" y="511" width="22" height="22" rx="3" fill="#2f2f2f"/><path d="M1426.500 514v16M1429.500 514v16M1423 519.500h16M1423 526.500h16" stroke="#c8c8c8" fill="none"/><path d="M1464.500 514v16M1467.500 514v16M1461 519.500h16M1461 526.500h9" stroke="#c8c8c8" fill="none"/><rect x="1471" y="526" width="7" height="5" fill="#c8c8c8"/><path d="M1473.500 526v-2c0-2.600 3.500-2.600 3.500-0.300" fill="none" stroke="#c8c8c8" stroke-width="1.100"/><path d="M1502.500 514v16M1499 519.500h16M1507 516 1503.200 519.500 1507 523" stroke="#c8c8c8" fill="none"/><path d="M1512.800 522.200h3.400l-1.900 3h2.100l-6.400 5.800 2.200-4.300h-2z" fill="#c8c8c8"/></svg>
</div>
<div id="frame"></div>
<svg style="left:0;top:0" width="4" height="4" viewBox="0 0 4 4" shape-rendering="crispEdges"><path d="M0 0h3v1h-2v2h-1z" fill="#ffc60b"/><path d="M1 1h1v1h-1z" fill="#1b2a4a"/></svg>
<svg style="left:1542px;top:0" width="4" height="4" viewBox="0 0 4 4" shape-rendering="crispEdges"><path d="M1 0h3v3h-1v-2h-2z" fill="#0a55e6"/></svg>
</body>
</html>
